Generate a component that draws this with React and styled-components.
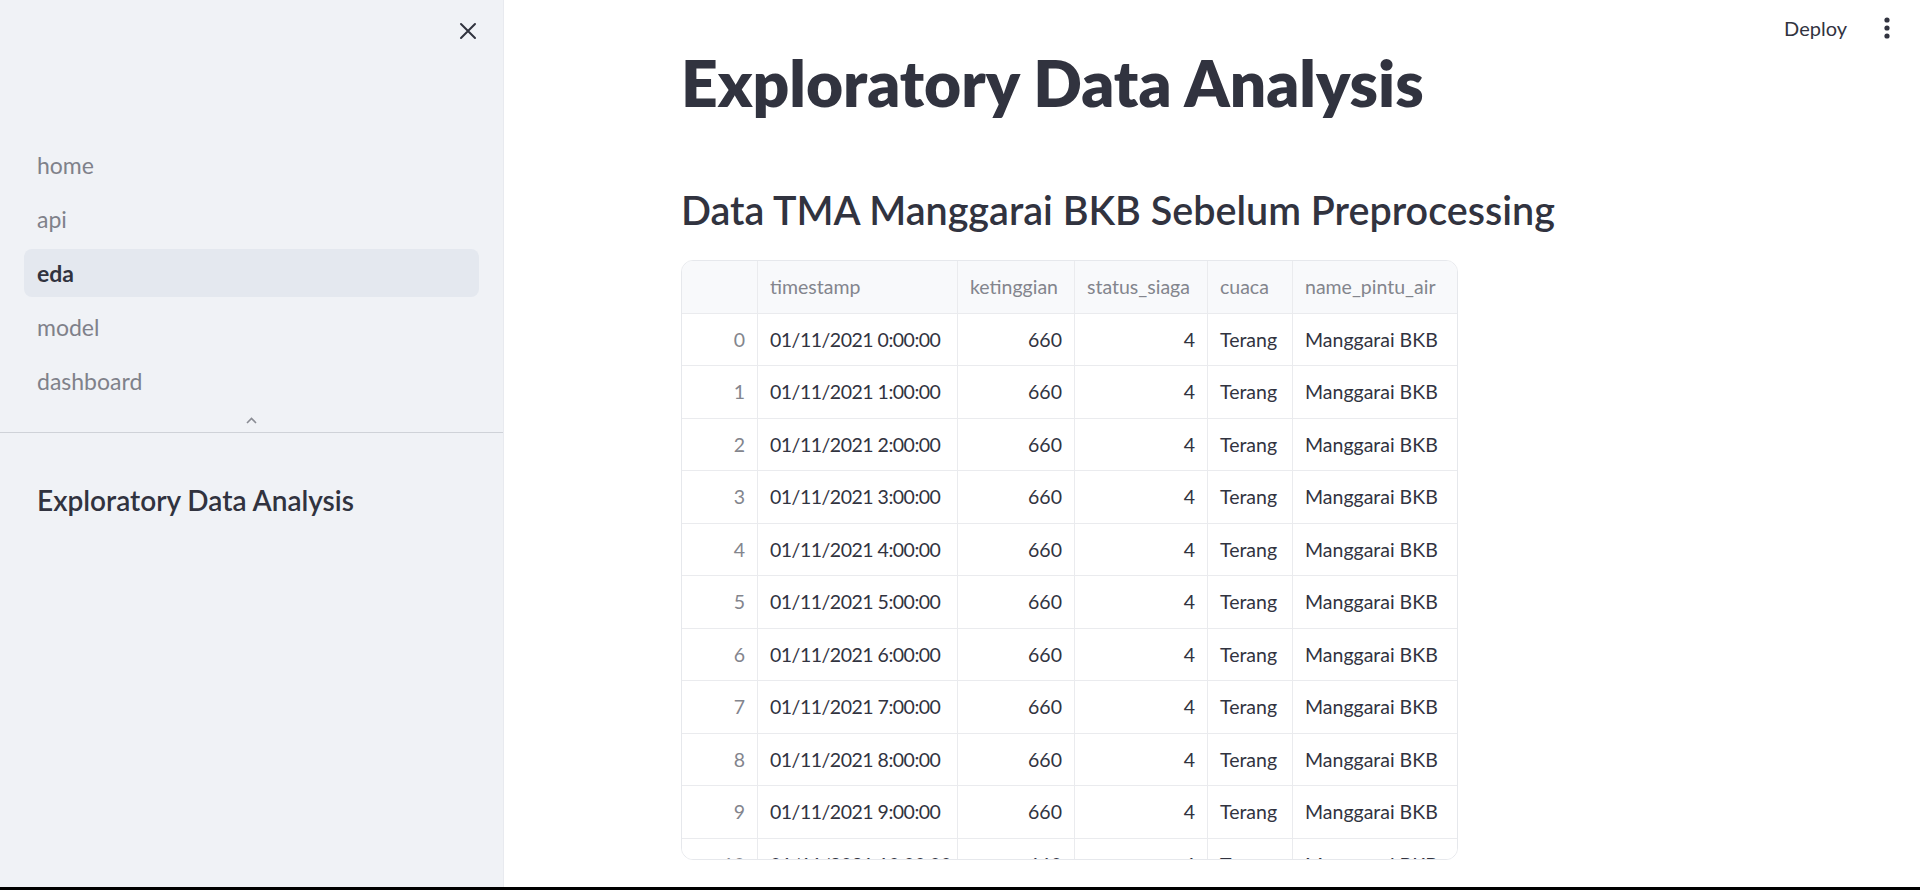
import React from "react";
import styled, { createGlobalStyle } from "styled-components";

const GlobalStyle = createGlobalStyle`
  html, body {
    margin: 0;
    padding: 0;
  }
  body {
    font-family: Lato, "Noto Sans", sans-serif;
    color: #31333f;
    background: #000;
    overflow: hidden;
  }
  * {
    box-sizing: border-box;
  }
`;

const pages = ["home", "api", "eda", "model", "dashboard"];

const columns = [
  { key: "idx", label: "", width: 76, align: "right", muted: true },
  { key: "timestamp", label: "timestamp", width: 200, align: "left" },
  { key: "ketinggian", label: "ketinggian", width: 117, align: "right" },
  { key: "status_siaga", label: "status_siaga", width: 133, align: "right" },
  { key: "cuaca", label: "cuaca", width: 85, align: "left" },
  { key: "name_pintu_air", label: "name_pintu_air", width: 165, align: "left" },
];

const rows = Array.from({ length: 11 }, (_, i) => ({
  idx: i,
  timestamp: `01/11/2021 ${i}:00:00`,
  ketinggian: 660,
  status_siaga: 4,
  cuaca: "Terang",
  name_pintu_air: "Manggarai BKB",
}));

const App = () => {
  return (
    <>
      <GlobalStyle />
      <Page>
        <Sidebar>
          <SidebarTop>
            <CloseButton aria-label="Close sidebar">
              <svg width="18" height="18" viewBox="0 0 18 18">
                <path
                  d="M2 2L16 16M16 2L2 16"
                  stroke="#31333f"
                  strokeWidth="2"
                  strokeLinecap="round"
                />
              </svg>
            </CloseButton>
          </SidebarTop>

          <Nav>
            {pages.map((p) => (
              <NavItem key={p} $active={p === "eda"}>
                {p}
              </NavItem>
            ))}
          </Nav>

          <Collapse>
            <svg width="11" height="7" viewBox="0 0 11 7">
              <path
                d="M1 6L5.5 1.5L10 6"
                fill="none"
                stroke="#8a8c94"
                strokeWidth="1.6"
              />
            </svg>
          </Collapse>
          <Divider />

          <SidebarBody>
            <SidebarTitle>Exploratory Data Analysis</SidebarTitle>
          </SidebarBody>
        </Sidebar>

        <Main>
          <Toolbar>
            <DeployButton>Deploy</DeployButton>
            <Kebab aria-label="Main menu">
              <svg width="24" height="24" viewBox="0 0 24 24">
                <circle cx="12" cy="4" r="2.6" fill="#31333f" />
                <circle cx="12" cy="12" r="2.6" fill="#31333f" />
                <circle cx="12" cy="20" r="2.6" fill="#31333f" />
              </svg>
            </Kebab>
          </Toolbar>

          <Block>
            <Title>Exploratory Data Analysis</Title>
            <Subheader>Data TMA Manggarai BKB Sebelum Preprocessing</Subheader>

            <Grid>
              <Row $header>
                {columns.map((c) => (
                  <Cell key={c.key} $w={c.width} $header $align="left">
                    {c.label}
                  </Cell>
                ))}
              </Row>
              {rows.map((r) => (
                <Row key={r.idx}>
                  {columns.map((c) => (
                    <Cell
                      key={c.key}
                      $w={c.width}
                      $align={c.align}
                      $muted={c.muted}
                      $tight={c.key === "timestamp"}
                    >
                      {r[c.key]}
                    </Cell>
                  ))}
                </Row>
              ))}
            </Grid>
          </Block>
        </Main>
      </Page>
      <BottomEdge />
    </>
  );
};

const Page = styled.div`
  display: grid;
  grid-template-columns: 504px 1fr;
  height: 887px;
  background: #ffffff;
`;

const BottomEdge = styled.div`
  height: 3px;
  background: #000;
`;

const Sidebar = styled.aside`
  background: #f0f2f6;
  display: flex;
  flex-direction: column;
  border-right: 1px solid #e8eaef;
`;

const SidebarTop = styled.div`
  height: 62px;
  display: flex;
  justify-content: flex-end;
  align-items: center;
  padding-right: 26px;
`;

const CloseButton = styled.button`
  border: none;
  background: transparent;
  padding: 0;
  display: flex;
  cursor: pointer;
`;

const Nav = styled.nav`
  display: flex;
  flex-direction: column;
  gap: 6px;
  padding: 0 24px;
  margin-top: 79px;
`;

const NavItem = styled.a`
  height: 48px;
  display: flex;
  align-items: center;
  padding-left: 13px;
  border-radius: 8px;
  font-size: 23px;
  color: ${(p) => (p.$active ? "#31333f" : "#7f818a")};
  font-weight: ${(p) => (p.$active ? 700 : 400)};
  background: ${(p) => (p.$active ? "#e4e8ef" : "transparent")};
  cursor: pointer;
`;

const Collapse = styled.div`
  height: 24px;
  display: flex;
  justify-content: center;
  align-items: center;
  margin-top: 3px;
`;

const Divider = styled.hr`
  margin: 0;
  border: none;
  border-top: 1.5px solid #cfd2d8;
`;

const SidebarBody = styled.div`
  padding: 51px 37px 0;
`;

const SidebarTitle = styled.h2`
  margin: 0;
  font-size: 28px;
  line-height: 1.2;
  font-weight: 600;
  color: #31333f;
`;

const Main = styled.main`
  position: relative;
  overflow: hidden;
`;

const Toolbar = styled.header`
  position: absolute;
  top: 0;
  right: 0;
  height: 56px;
  display: flex;
  align-items: center;
  gap: 28px;
  padding-right: 21px;
`;

const DeployButton = styled.button`
  border: none;
  background: transparent;
  padding: 0;
  font-family: Lato, "Noto Sans", sans-serif;
  font-size: 20px;
  color: #31333f;
  cursor: pointer;
`;

const Kebab = styled.button`
  border: none;
  background: transparent;
  padding: 0;
  display: flex;
  cursor: pointer;
`;

const Block = styled.div`
  width: 1104px;
  margin: 0 auto;
  padding: 45px 21px 0;
`;

const Title = styled.h1`
  margin: 0;
  font-size: 64px;
  line-height: 1.2;
  font-weight: 800;
  color: #31333f;
`;

const Subheader = styled.h3`
  margin: 64px 0 0;
  font-size: 39.5px;
  line-height: 1.2;
  font-weight: 600;
  color: #31333f;
`;

const Grid = styled.div`
  margin-top: 27px;
  width: 777px;
  height: 600px;
  border: 1px solid #e6e8ec;
  border-radius: 12px;
  overflow: hidden;
`;

const Row = styled.div`
  display: flex;
  height: 52.5px;
  background: ${(p) => (p.$header ? "#f8f9fb" : "#ffffff")};
  border-bottom: 1px solid #eaebee;
`;

const Cell = styled.div`
  flex: 0 0 ${(p) => p.$w}px;
  display: flex;
  align-items: center;
  justify-content: ${(p) => (p.$align === "right" ? "flex-end" : "flex-start")};
  padding: 0 12px;
  border-right: 1px solid #eaebee;
  font-size: 19.5px;
  letter-spacing: ${(p) => (p.$tight ? "-0.5px" : "0")};
  white-space: nowrap;
  overflow: hidden;
  color: ${(p) => (p.$header || p.$muted ? "#83858d" : "#31333f")};

  &:last-child {
    border-right: none;
  }
`;

export default App;
